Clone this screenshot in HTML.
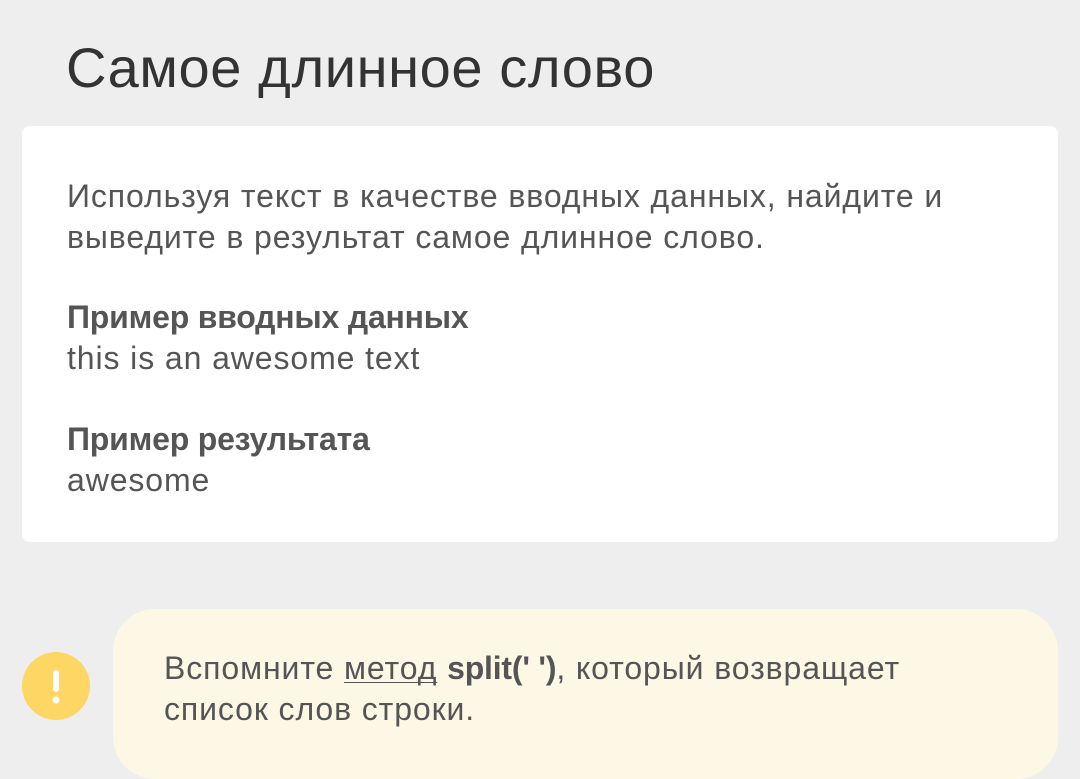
<!DOCTYPE html>
<html><head><meta charset="utf-8"><style>
body{margin:0;width:1080px;height:760px;background:#eeeeee;font-family:"Liberation Sans",sans-serif;color:#555;position:relative;overflow:hidden}
h1{position:absolute;left:66px;top:36px;margin:0;font-weight:400;font-size:56px;color:#333;line-height:64px;letter-spacing:0.6px}
.card{position:absolute;left:22px;top:126px;width:1036px;height:416px;background:#fff;border-radius:8px}
.t{position:absolute;left:67px;font-size:32px;line-height:41px;color:#555;white-space:nowrap;letter-spacing:0.9px}
b{font-weight:700;letter-spacing:-0.2px}
.hint{position:absolute;left:113px;top:609px;width:945px;height:170px;background:#fdf8e6;border-radius:42px}
.ic{position:absolute;left:22px;top:652px;width:68px;height:68px;border-radius:50%;background:#fdd663}
a{color:#555;text-decoration:underline;text-decoration-skip-ink:none;text-decoration-thickness:1px;text-underline-offset:3px}
</style></head><body>
<h1>Самое длинное слово</h1>
<div class="card"></div>
<div class="t" style="top:176px">Используя текст в качестве вводных данных, найдите и<br>выведите в результат самое длинное слово.</div>
<div class="t" style="top:297px"><b>Пример вводных данных</b><br>this is an awesome text</div>
<div class="t" style="top:419px"><b>Пример результата</b><br>awesome</div>
<div class="hint"></div>
<div class="ic"><svg width="68" height="68"><rect x="31" y="18" width="6" height="22" rx="3" fill="#fff"/><circle cx="34" cy="48" r="3.5" fill="#fff"/></svg></div>
<div class="t" style="left:164px;top:648px">Вспомните <a>метод</a> <b>split(' ')</b>, который возвращает<br>список слов строки.</div>
</body></html>
